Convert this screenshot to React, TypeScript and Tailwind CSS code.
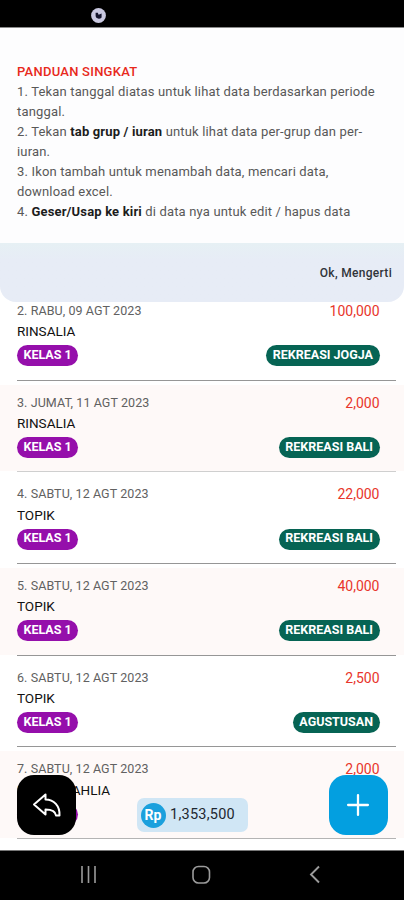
import { Plus } from "lucide-react";

const rows = [
  { no: 2, date: "RABU, 09 AGT 2023", name: "RINSALIA", group: "KELAS 1", due: "REKREASI JOGJA", amount: "100,000", line: "bg-[#969696]" },
  { no: 3, date: "JUMAT, 11 AGT 2023", name: "RINSALIA", group: "KELAS 1", due: "REKREASI BALI", amount: "2,000", line: "bg-[#cfcfcf]" },
  { no: 4, date: "SABTU, 12 AGT 2023", name: "TOPIK", group: "KELAS 1", due: "REKREASI BALI", amount: "22,000", line: "bg-[#969696]" },
  { no: 5, date: "SABTU, 12 AGT 2023", name: "TOPIK", group: "KELAS 1", due: "REKREASI BALI", amount: "40,000", line: "bg-[#969696]" },
  { no: 6, date: "SABTU, 12 AGT 2023", name: "TOPIK", group: "KELAS 1", due: "AGUSTUSAN", amount: "2,500", line: "bg-[#969696]" },
  { no: 7, date: "SABTU, 12 AGT 2023", name: "NURUL DAHLIA", group: "KELAS 1", due: "", amount: "2,000", line: "bg-[#b4b4b4]" },
];

type Row = (typeof rows)[number];

function StatusBar() {
  return (
    <header className="h-[27px] shrink-0 bg-black pl-[91px] pt-[8px]">
      <svg width="15" height="15" viewBox="0 0 15 15">
        <circle cx="7.5" cy="7.5" r="7.4" fill="#c9c8e0" />
        <path d="M4.6 4.8 L6.8 4.8 L7.6 6.8 L10.6 5.4 L10.6 9.6 Q9.5 10.8 7.8 10.8 Q4.6 10.2 4.6 7.5 Z" fill="#14142c" />
      </svg>
    </header>
  );
}

function GuidePanel() {
  return (
    <section className="relative z-10 h-[275px] shrink-0 overflow-hidden rounded-b-[16px] border-t border-[#8a8a8a] bg-[#fdfdfe]">
      <div className="h-[215px] pl-[17px] pt-[34px] text-[13px] leading-[20px] tracking-[0.16px] text-[#585858]">
        <h1 className="font-medium tracking-[0.25px] text-[#e8291c]">PANDUAN SINGKAT</h1>
        <p>
          1. Tekan tanggal diatas untuk lihat data berdasarkan periode
          <br />
          tanggal.
        </p>
        <p>
          2. Tekan <b className="font-bold text-[#1c1c1c]">tab grup / iuran</b> untuk lihat data per-grup dan per-
          <br />
          iuran.
        </p>
        <p>
          3. Ikon tambah untuk menambah data, mencari data,
          <br />
          download excel.
        </p>
        <p>
          4. <b className="font-bold text-[#1c1c1c]">Geser/Usap ke kiri</b> di data nya untuk edit / hapus data
        </p>
      </div>
      <div className="flex h-[59px] items-center justify-end bg-gradient-to-b from-[#e6f0f4] to-[#e7ecf6] to-30% pr-[12px]">
        <button className="text-[12px] font-medium tracking-[0.3px] text-[#30343a]">Ok, Mengerti</button>
      </div>
    </section>
  );
}

function Badge({ label, color }: { label: string; color: string }) {
  return (
    <span className={`flex h-[21px] items-center rounded-full px-[6.5px] pb-[1px] text-[12.5px] font-bold text-white ${color}`}>
      {label}
    </span>
  );
}

function DueRow({ row }: { row: Row }) {
  return (
    <li className="h-[91.7px] shrink-0">
      <div className={`h-[86.7px] pl-[17px] pr-[24.5px] pt-[8.5px] ${row.no % 2 ? "bg-[#fef9f8]" : "bg-white"}`}>
        <div className="flex h-[20px] items-center justify-between">
          <span className="text-[12.5px] tracking-[0.08px] text-[#616161]">
            {row.no}. {row.date}
          </span>
          <span className="text-[14px] text-[#e8352b]">{row.amount}</span>
        </div>
        <div className="flex h-[20px] items-center text-[13.5px] text-[#111]">{row.name}</div>
        <div className="flex justify-between pt-[4px]">
          <Badge label={row.group} color="bg-[#950fab]" />
          {row.due && <Badge label={row.due} color="bg-[#066454]" />}
        </div>
      </div>
      <div className={`ml-[17px] mr-[8px] h-px ${row.line}`} />
    </li>
  );
}

function BottomActions() {
  return (
    <div className="absolute inset-x-0 bottom-[15.5px] z-20 flex items-end pl-[17px] pr-[16px]">
      <button className="flex h-[59.5px] w-[59px] items-center justify-center rounded-[17px] bg-black">
        <svg width="30" height="26" viewBox="0 0 30 26" fill="none" stroke="#fff" strokeWidth="2" strokeLinejoin="round">
          <path d="M2 12.5 L13.5 2.5 L13.5 7.5 C22 7.5 28 14 27.5 23.5 L24 23.5 C23.5 19.5 20 17.5 13.5 17.5 L13.5 22.5 Z" />
        </svg>
      </button>
      <div className="mb-[2.5px] ml-[60.5px] flex h-[34px] w-[111px] items-center gap-[4.5px] rounded-[7px] bg-[#d0e6f5] pl-[4px]">
        <span className="flex size-[25px] items-center justify-center rounded-full bg-[#1ba0dd] text-[14px] font-bold text-white">
          Rp
        </span>
        <span className="text-[14.5px] tracking-[0.25px] text-[#1e2830]">1,353,500</span>
      </div>
      <button className="ml-auto flex size-[59.5px] items-center justify-center rounded-[17px] bg-[#039fe0]">
        <Plus className="size-[34px] text-white" strokeWidth={1.6} />
      </button>
    </div>
  );
}

function NavBar() {
  return (
    <nav className="h-[50px] shrink-0 border-t border-[#777] bg-black">
      <svg width="404" height="49" viewBox="0 0 404 49" fill="none" stroke="#9b9b9b" strokeWidth="1.6">
        <path d="M82 15v17M88.5 15v17M95 15v17" />
        <rect x="193" y="15.5" width="16.5" height="16.5" rx="5.5" />
        <path d="M319 15.5L311 23.5L319 31.5" strokeWidth="1.9" />
      </svg>
    </nav>
  );
}

export default function App() {
  return (
    <div className="flex h-[900px] w-[404px] flex-col overflow-hidden bg-white font-['Roboto',sans-serif]">
      <StatusBar />
      <main className="relative flex h-[823px] shrink-0 flex-col overflow-hidden">
        <GuidePanel />
        <ul className="-mt-[9.2px] flex flex-col">
          {rows.map((row) => (
            <DueRow key={row.no} row={row} />
          ))}
        </ul>
        <BottomActions />
      </main>
      <NavBar />
    </div>
  );
}
